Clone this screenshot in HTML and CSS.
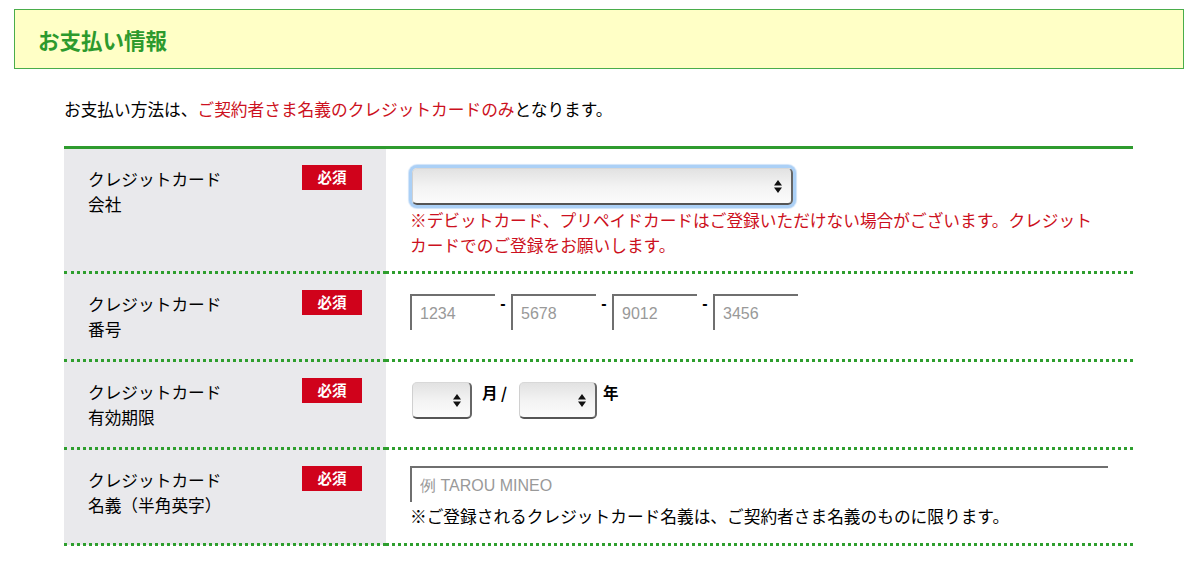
FILE: index.html
```html
<!DOCTYPE html>
<html lang="ja">
<head>
    <meta charset="UTF-8">
    <meta name="viewport" content="width=device-width, initial-scale=1.0">
    <title>お支払い情報</title>
    <link rel="stylesheet" href="styles.css">
</head>
<body>
    <div class="section-head">
        <h2>お支払い情報</h2>
    </div>

    <p class="intro">お支払い方法は、<span class="em">ご契約者さま名義のクレジットカードのみ</span>となります。</p>

    <table class="form-table">
        <tr>
            <th>
                <div class="th-inner">
                    <span class="label">クレジットカード<br>会社</span>
                    <span class="req">必須</span>
                </div>
            </th>
            <td>
                <div class="select-box select-wide focused">
                    <select id="card-company"><option value=""></option></select>
                    <svg class="arrow" width="8" height="13" viewBox="0 0 8 13"><path d="M4 0 L8 5.5 H0 Z M0 7.5 H8 L4 13 Z" fill="#111"/></svg>
                </div>
                <p class="note red">※デビットカード、プリペイドカードはご登録いただけない場合がございます。クレジットカードでのご登録をお願いします。</p>
            </td>
        </tr>
        <tr>
            <th>
                <div class="th-inner">
                    <span class="label">クレジットカード<br>番号</span>
                    <span class="req">必須</span>
                </div>
            </th>
            <td>
                <div class="card-number">
                    <input type="text" class="text-input num" placeholder="1234">
                    <span class="dash">-</span>
                    <input type="text" class="text-input num" placeholder="5678">
                    <span class="dash">-</span>
                    <input type="text" class="text-input num" placeholder="9012">
                    <span class="dash">-</span>
                    <input type="text" class="text-input num" placeholder="3456">
                </div>
            </td>
        </tr>
        <tr>
            <th>
                <div class="th-inner">
                    <span class="label">クレジットカード<br>有効期限</span>
                    <span class="req">必須</span>
                </div>
            </th>
            <td>
                <div class="expire">
                    <div class="select-box select-month">
                        <select id="exp-month"><option value=""></option></select>
                        <svg class="arrow" width="8" height="13" viewBox="0 0 8 13"><path d="M4 0 L8 5.5 H0 Z M0 7.5 H8 L4 13 Z" fill="#111"/></svg>
                    </div>
                    <span class="unit">月 /</span>
                    <div class="select-box select-year">
                        <select id="exp-year"><option value=""></option></select>
                        <svg class="arrow" width="8" height="13" viewBox="0 0 8 13"><path d="M4 0 L8 5.5 H0 Z M0 7.5 H8 L4 13 Z" fill="#111"/></svg>
                    </div>
                    <span class="unit">年</span>
                </div>
            </td>
        </tr>
        <tr>
            <th>
                <div class="th-inner">
                    <span class="label">クレジットカード<br>名義（半角英字）</span>
                    <span class="req">必須</span>
                </div>
            </th>
            <td>
                <input type="text" class="text-input name" placeholder="例 TAROU MINEO">
                <p class="note last">※ご登録されるクレジットカード名義は、ご契約者さま名義のものに限ります。</p>
            </td>
        </tr>
    </table>
</body>
</html>
```

FILE: styles.css
```css
body {
    margin: 9px 14px;
    font-family: "Noto Sans CJK JP", "Liberation Sans", sans-serif;
    font-size: 16.7px;
    color: #000;
}
.section-head {
    height: 58px;
    border: 1px solid #4aad4a;
    background-color: #ffffc6;
    display: flex;
    align-items: center;
    padding-left: 23px;
}
.section-head h2 {
    margin: 0;
    font-size: 21.5px;
    font-weight: bold;
    color: #2d9a2d;
}
.intro {
    margin: 28px 0 0 50px;
    line-height: 25px;
}
.em {
    color: #cc1020;
}
.form-table {
    margin: 24px 0 0 50px;
    width: 1069px;
    border-collapse: collapse;
    border-top: 3px solid #2e9b2e;
}
.form-table tr {
    border-bottom: 3px dotted #2e9e2e;
}
.form-table th {
    width: 322px;
    background-color: #e9e9ec;
    vertical-align: top;
    text-align: left;
    font-weight: normal;
    padding: 18px 0 17px 24px;
    box-sizing: border-box;
}
.th-inner {
    display: flex;
    justify-content: space-between;
    align-items: flex-start;
}
.label {
    line-height: 25px;
}
.req {
    width: 60px;
    height: 25px;
    margin: -2px 24px 0 0;
    background-color: #d0021b;
    color: #fff;
    font-size: 14.5px;
    font-weight: bold;
    line-height: 24px;
    text-align: center;
}
.form-table td {
    vertical-align: top;
    padding: 16px 24px 13px 24px;
}
.note {
    margin: 0;
    line-height: 25px;
    width: 690px;
}
.note.last {
    padding-bottom: 1px;
}
.red {
    color: #cc1020;
}
.select-box {
    position: relative;
    height: 37px;
    box-sizing: border-box;
    border-radius: 5px;
    border-top: 1px solid #d8d8d8;
    border-left: 1px solid #d0d0d0;
    border-right: 2px solid #666;
    border-bottom: 2px solid #555;
    background: linear-gradient(to bottom, #e2e2e2 0%, #f4f4f4 55%, #fbfbfb 100%);
    margin-left: 2px;
}
.select-box select {
    appearance: none;
    -webkit-appearance: none;
    width: 100%;
    height: 100%;
    border: none;
    background: transparent;
    outline: none;
}
.select-box .arrow {
    position: absolute;
    right: 9px;
    top: 11px;
}
.select-wide {
    width: 381px;
    margin-top: 3px;
    margin-bottom: 3px;
}
.focused {
    box-shadow: 0 0 0 3px #abd0f6, 0 0 1px 4px #cfe3f9;
}
.card-number {
    display: flex;
    align-items: flex-start;
    margin-top: 4px;
}
.text-input {
    box-sizing: border-box;
    height: 36px;
    border: none;
    border-top: 2px solid #6f6f6f;
    border-left: 2px solid #6f6f6f;
    background: #fff;
    padding: 2px 0 0 8px;
    font-family: "Liberation Sans", Arial, sans-serif;
    font-size: 16px;
    color: #333;
    outline: none;
}
.text-input::placeholder {
    color: #999;
}
.num {
    width: 85px;
}
.dash {
    width: 16px;
    text-align: center;
    font-family: "Liberation Sans", Arial, sans-serif;
    line-height: 20px;
    font-size: 16px;
    font-weight: bold;
}
.expire {
    display: flex;
    align-items: flex-start;
    margin-top: 4px;
}
.select-month {
    width: 60px;
}
.select-year {
    width: 78px;
}
.unit {
    line-height: 20px;
    margin: 0 10px 0 10px;
    font-weight: bold;
    font-size: 15.5px;
}
.expire .unit:last-child {
    margin-left: 6px;
}
.name {
    width: 698px;
    display: block;
    margin-bottom: 2px;
}
```
